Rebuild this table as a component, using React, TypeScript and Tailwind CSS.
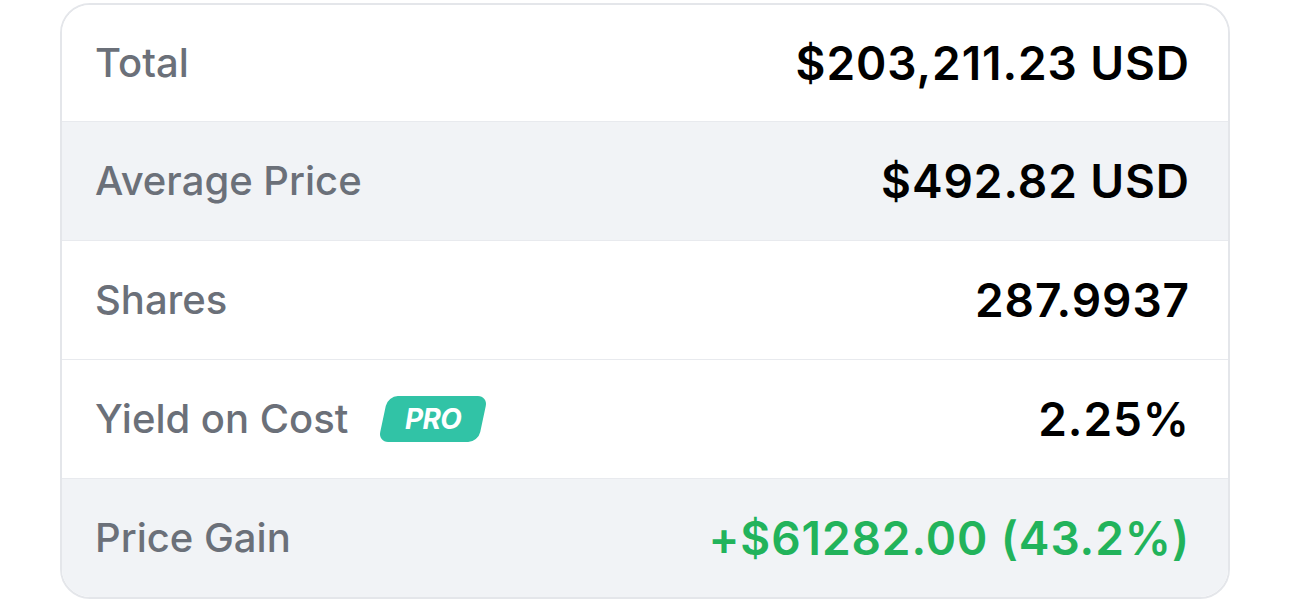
import React from 'react';

type Row = {
  label: string;
  value: string;
  shade?: boolean;
  pro?: boolean;
  gain?: boolean;
};

const rows: Row[] = [
  { label: 'Total', value: '$203,211.23 USD' },
  { label: 'Average Price', value: '$492.82 USD', shade: true },
  { label: 'Shares', value: '287.9937' },
  { label: 'Yield on Cost', value: '2.25%', pro: true },
  { label: 'Price Gain', value: '+$61282.00 (43.2%)', shade: true, gain: true },
];

const ProBadge = () => (
  <span className="ml-[35px] inline-flex h-[46px] w-[100px] items-center justify-center rounded-[10px] bg-[#31c3a6] -skew-x-12">
    <span className="skew-x-12 text-[28px] font-bold italic leading-none tracking-tight text-white">PRO</span>
  </span>
);

export default function App() {
  return (
    <div className="min-h-[610px] bg-white px-[60px] pt-[3px] font-['Inter',sans-serif]">
      <div className="overflow-hidden rounded-[30px] border-2 border-[#e4e6ea]">
        {rows.map((r, i) => (
          <div
            key={r.label}
            className={`flex items-center justify-between pl-[33px] pr-[38px] ${
              r.shade ? 'bg-[#f1f3f6]' : 'bg-white'
            } ${i > 0 ? 'h-[119px] border-t border-[#e8eaee]' : 'h-[116px]'}`}
          >
            <div className="flex items-center">
              <span className="text-[40px] font-[450] text-[#6b7079]">{r.label}</span>
              {r.pro && <ProBadge />}
            </div>
            <span
              className={`text-[46px] font-semibold tracking-[0.02em] ${r.gain ? 'text-[#22b35b]' : 'text-black'}`}
            >
              {r.value}
            </span>
          </div>
        ))}
      </div>
    </div>
  );
}
